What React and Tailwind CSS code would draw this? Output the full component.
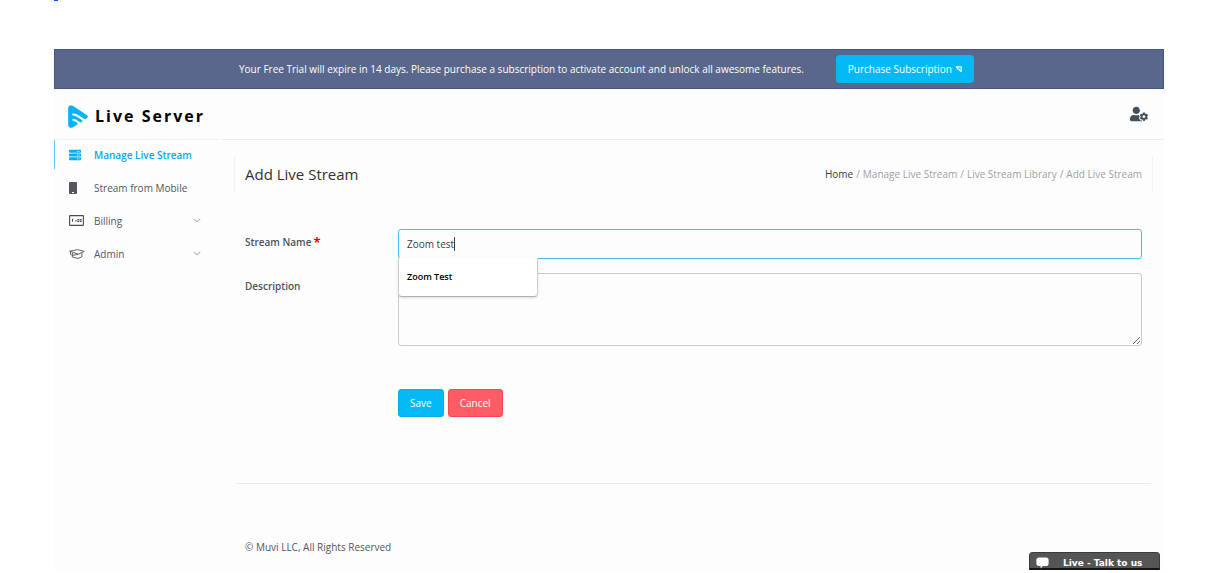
import { useState } from "react";
import { FaServer, FaUserCog } from "react-icons/fa";

const LogoMark = () => (
  <svg viewBox="0 0 20 23" className="h-[23px] w-5 shrink-0" aria-hidden="true">
    <path
      d="M0.2 3.6C0.2 0.6 2.6 -0.4 5 1L18.6 9.9C20.2 11 20.2 12.4 18.6 13.3L17 14.2L9.4 9.6C6.8 8.2 4.2 8.4 3.6 9.4C5 9.2 6.6 9.8 8 10.7L14.2 14.9Q15.2 15.9 14 16.6L12.6 17.4L8 14.6C6.2 13.6 4.4 13.8 4 14.8C5 14.7 6 15.1 7 15.8L9.2 17.4Q10.4 18.6 9 19.6L5.2 22C2.8 23.5 0.2 22.6 0.2 19.6Z"
      fill="#04b4f4"
      stroke="#04b4f4"
      strokeWidth="0.2"
    />
    <path d="M5 9.6Q7 9.6 8.8 10.8L15.8 15.4M5 14.9Q6.4 15 7.6 15.9L11.6 18.6" fill="none" stroke="#fdfdfd" strokeWidth="1.6" strokeLinecap="round" />
  </svg>
);

const ServerIcon = () => <FaServer size={12} color="#04b0f0" />;

const PhoneIcon = () => (
  <svg viewBox="0 0 8 12" className="h-3 w-2" aria-hidden="true">
    <rect width="8" height="12" rx="1" fill="#55565c" />
    <rect x="3" y="10" width="2" height="1" fill="#fff" />
  </svg>
);

const BillIcon = () => (
  <svg viewBox="0 0 15 11" className="h-[11px] w-[15px]" aria-hidden="true">
    <rect x="0.6" y="0.6" width="13.8" height="9.8" rx="0.5" fill="none" stroke="#4a4b50" strokeWidth="1.1" />
    <path d="M3.5 3.8v3M6.2 5.8h1.6M8.4 4.6h1.6M8.4 6.4h1.6M10.6 4.6h2M10.6 6.4h2" stroke="#4a4b50" strokeWidth="1.1" />
  </svg>
);

const CapIcon = () => (
  <svg viewBox="0 0 16 10" className="h-[10px] w-4" fill="none" stroke="#55565c" strokeWidth="0.9" aria-hidden="true">
    <path d="M0.6 2.2L4.2 1.6L8.4 0.6L15.2 2.4L9.4 5.2L0.6 2.2ZM3.8 3.9L3.2 8L9 9.4L13 7.8L12.8 3.8M1.4 2.8L1.6 5.4L3.4 6.4M3.4 6.4L9.2 5.2" />
  </svg>
);

const Chevron = () => (
  <svg viewBox="0 0 8 5" className="h-[5px] w-2" fill="none" stroke="#a9b5bd" strokeWidth="1.1" aria-hidden="true">
    <path d="M0.8 0.8L4 3.8L7.2 0.8" />
  </svg>
);

const items = [
  { label: "Manage Live Stream", Icon: ServerIcon, active: true },
  { label: "Stream from Mobile", Icon: PhoneIcon },
  { label: "Billing", Icon: BillIcon, sub: true },
  { label: "Admin", Icon: CapIcon, sub: true },
];

function Sidebar() {
  return (
    <nav className="w-[165px] shrink-0">
      <ul>
        {items.map(({ label, Icon, active, sub }) => (
          <li key={label} className="pb-1">
            <a
              href="#"
              className={
                active
                  ? "flex h-[29px] items-center border-l border-[#5cc8f4] pl-[14px] font-semibold text-[#04a9ea]"
                  : "flex h-[29px] items-center border-l border-transparent pl-[14px] text-[#55565c]"
              }
            >
              <span className="flex w-[25px] items-center">
                <Icon />
              </span>
              <span className="flex-1">{label}</span>
              {sub && (
                <span className="mr-[18px]">
                  <Chevron />
                </span>
              )}
            </a>
          </li>
        ))}
      </ul>
    </nav>
  );
}

export default function App() {
  const [name, setName] = useState("Zoom test");
  return (
    <div className="relative flex min-h-screen flex-col bg-white pt-[49px] pr-[66px] pb-[3px] pl-[54px] font-['Open_Sans',sans-serif] text-[10px] leading-4 text-[#3c3d42]">
      <div className="absolute top-0 left-[54px] h-px w-1 bg-[#0050ff]" />
      <div className="flex h-10 items-center border border-[#46548a] bg-[#5a678c] pl-[184px] text-white">
        <p className="mr-8 pb-px">
          Your Free Trial will expire in 14 days. Please purchase a subscription to activate account and unlock all awesome features.
        </p>
        <button className="flex h-7 items-center gap-1 rounded-sm bg-[#04b9f6] px-3">
          Purchase Subscription
          <svg viewBox="0 0 6 6" className="size-[6px]" fill="none" stroke="#fff" strokeWidth="1.2" aria-hidden="true">
            <path d="M0.6 0.8H5.2V5.4L3.4 4.4V3.4L1.4 2.6Z" />
          </svg>
        </button>
      </div>

      <div className="flex grow flex-col bg-[#fdfdfd]">
        <header className="flex h-[51px] items-center">
          <div className="flex h-full w-[165px] items-center gap-[7px] border-b border-[#f0f0f0] pt-1 pl-[14px]">
            <LogoMark />
            <h1 className="text-[16px] font-bold tracking-[2px] whitespace-nowrap text-black">Live Server</h1>
          </div>
          <div className="ml-1 flex h-full grow items-center justify-end border-b border-[#ececec] pr-4">
            <button aria-label="Account settings">
              <FaUserCog size={18} color="#44505a" />
            </button>
          </div>
        </header>

        <div className="flex grow">
          <Sidebar />
          <main className="mt-4 flex grow flex-col pr-[11px] pl-[15px]">
            <div className="flex h-9 items-center justify-between border-x border-[#f2f2f2] px-[10px]">
              <h2 className="text-[15px] leading-5 text-[#303136]">Add Live Stream</h2>
              <ol className="flex gap-[3px] text-[#a0a1a5]">
                <li><a href="#" className="text-[#3c3d42]">Home</a></li>
                <li>/</li>
                <li><a href="#">Manage Live Stream</a></li>
                <li>/</li>
                <li><a href="#">Live Stream Library</a></li>
                <li>/</li>
                <li>Add Live Stream</li>
              </ol>
            </div>

            <form className="mt-[37px] px-[11px]" onSubmit={(e) => e.preventDefault()}>
              <div className="flex">
                <label htmlFor="name" className="flex w-[153px] shrink-0 gap-[2px] pt-[5px] font-semibold text-[#505157]">
                  Stream Name
                  <span className="text-[13px] font-bold text-[#f00]">*</span>
                </label>
                <div className="relative grow">
                  <input
                    id="name"
                    value={name}
                    onChange={(e) => setName(e.target.value)}
                    className="block h-[30px] w-full rounded-[3px] border border-[#45c1ee] px-2 pb-px caret-transparent outline-none"
                  />
                  <div className="pointer-events-none absolute top-2 left-[9px] flex h-[14px]" aria-hidden="true">
                    <span className="invisible whitespace-pre">{name}</span>
                    <span className="w-px bg-[#3c3d42]" />
                  </div>
                  <div className="absolute top-[29px] left-0 z-10 flex h-[39px] w-[140px] items-center rounded-b-sm border border-t-0 border-[#cfcfcf] border-b-[#b0b0b0] bg-white px-2 text-[9px] font-semibold text-black shadow-sm">
                    Zoom Test
                  </div>
                </div>
              </div>
              <div className="mt-[14px] flex">
                <label htmlFor="desc" className="w-[153px] shrink-0 pt-[5px] font-semibold text-[#505157]">Description</label>
                <textarea id="desc" className="block h-[73px] grow rounded-[3px] border border-[#cbcbcb] px-2" />
              </div>
              <div className="mt-[43px] ml-[153px] flex gap-1 text-white">
                <button className="h-7 rounded-[3px] border border-[#06aeea] bg-[#04b9f6] px-[11px]">Save</button>
                <button type="button" className="h-7 rounded-[3px] border border-[#fb4650] bg-[#ff5c65] px-[11px]">Cancel</button>
              </div>
            </form>

            <footer className="mx-[2px] mt-[66px] border-t border-[#ebebeb] pt-[55px] pl-[9px] text-[#55565c]">
              © Muvi LLC, All Rights Reserved
            </footer>
          </main>
        </div>
      </div>

      <button className="absolute right-[70px] bottom-[3px] flex h-[18px] w-[131px] items-center gap-[14px] rounded-t-sm border border-b-2 border-[#3a3a3a] border-b-[#151515] bg-[#555] pt-1 pl-[6px] font-['DejaVu_Sans',sans-serif] text-[9px] font-bold whitespace-nowrap text-white">
        <svg viewBox="0 0 13 12" className="h-3 w-[13px]" fill="#fff" aria-hidden="true">
          <path d="M3 0.5H10Q12.6 0.5 12.6 3V6.5Q12.6 9 10 9H6.8L4.6 11.6V9H3Q0.4 9 0.4 6.5V3Q0.4 0.5 3 0.5Z" />
        </svg>
        Live - Talk to us
      </button>
    </div>
  );
}
